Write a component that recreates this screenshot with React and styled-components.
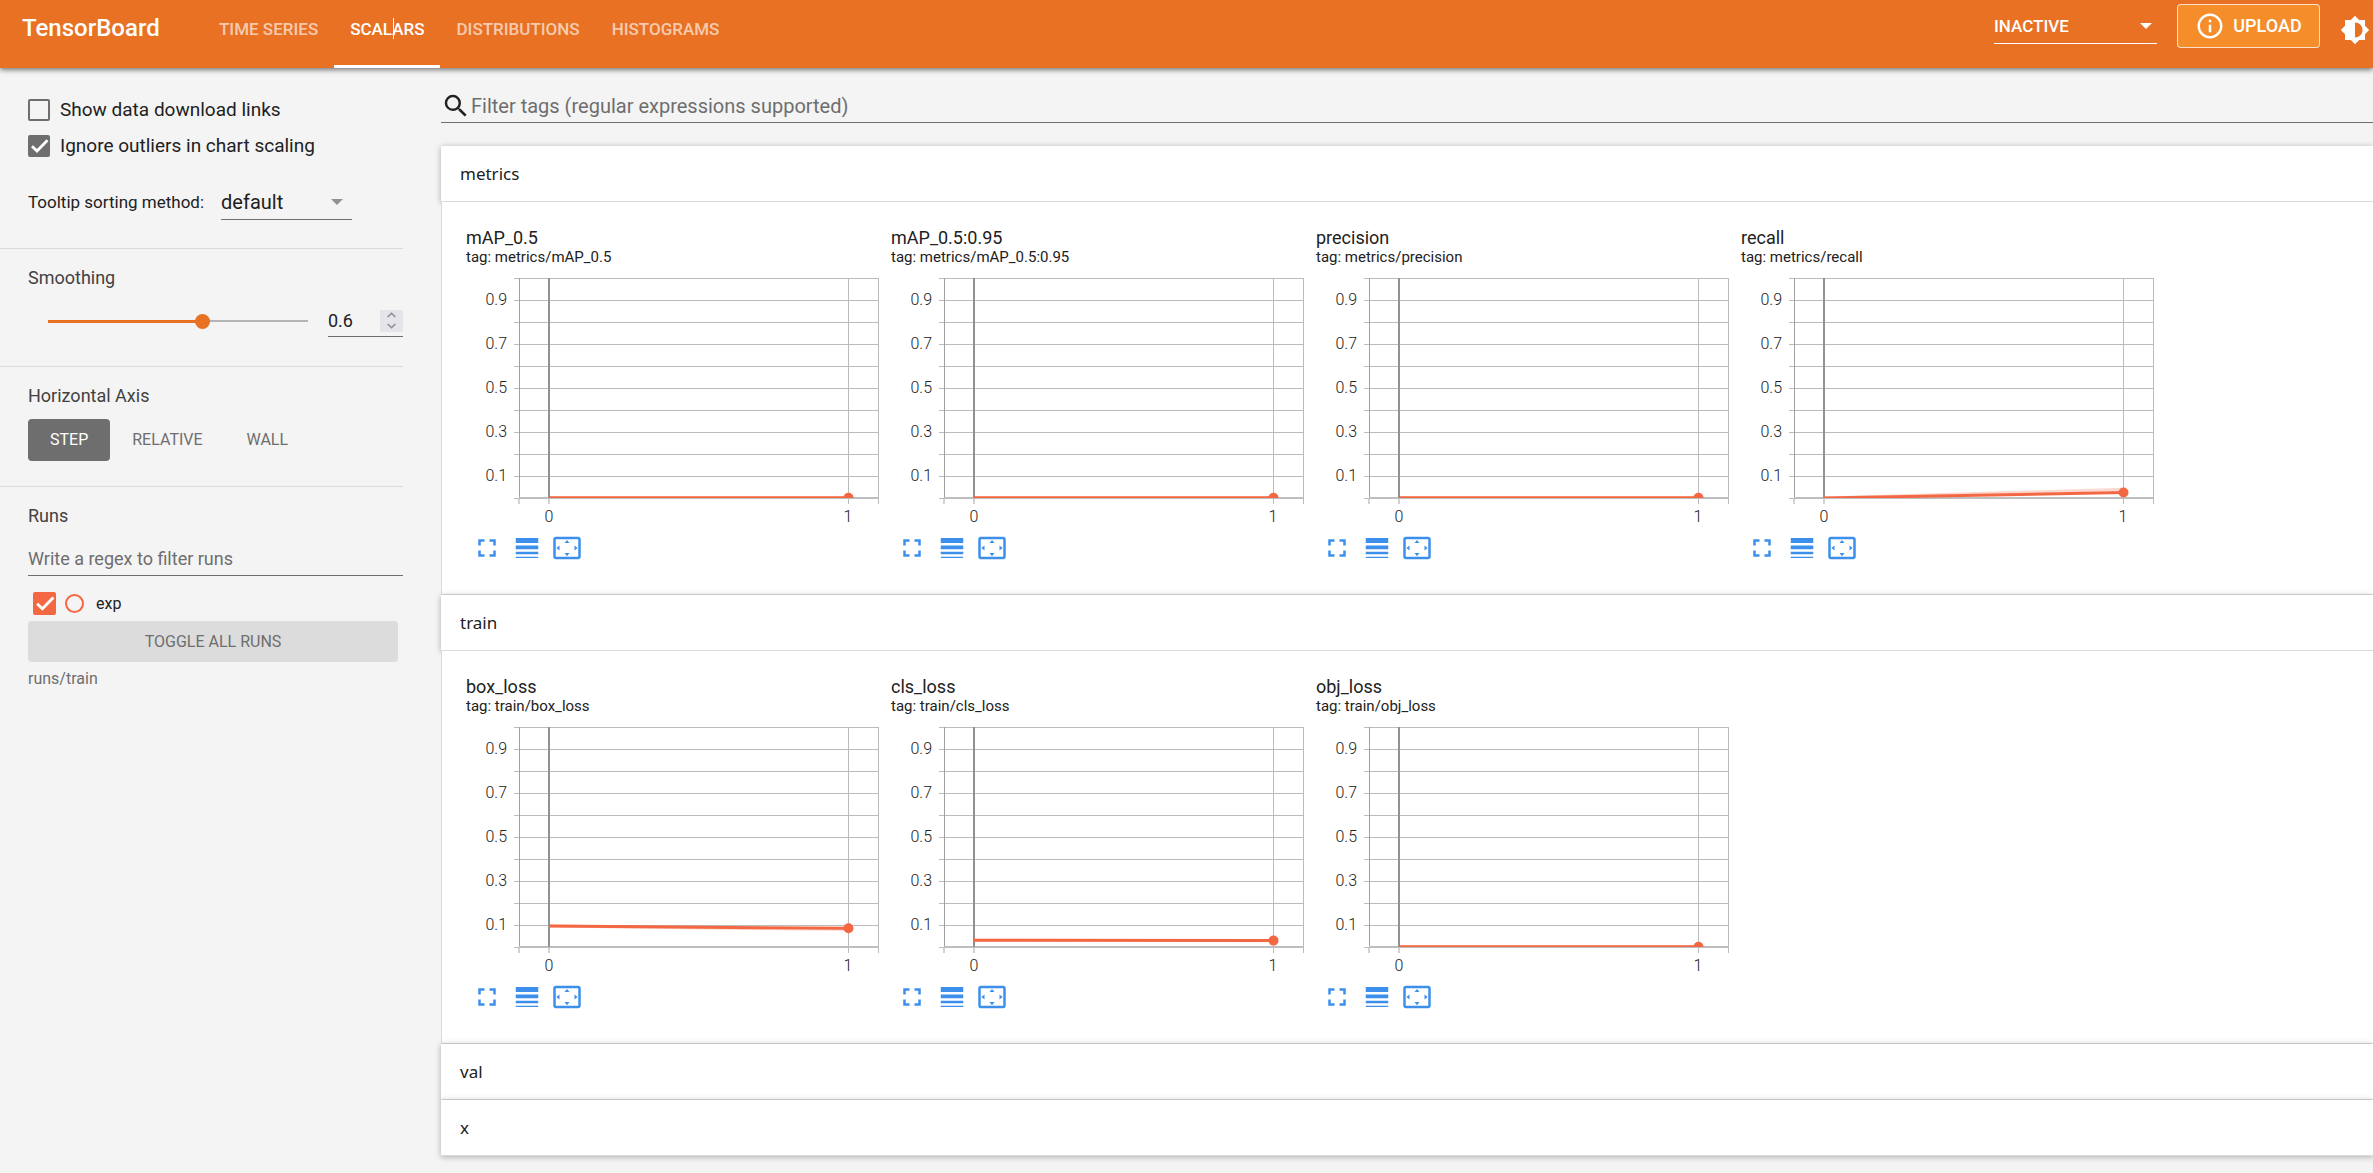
import React, { useId, useState } from "react";
import styled, { createGlobalStyle } from "styled-components";
import {
  MdBrightness6,
  MdFullscreen,
  MdInfoOutline,
  MdLineWeight,
  MdSearch,
  MdSettingsOverscan,
} from "react-icons/md";

const colors = {
  primary: "rgb(232, 113, 36)",
  upload: "rgb(246, 141, 43)",
  run: "rgb(244, 103, 67)",
  action: "rgb(60, 144, 236)",
  page: "rgb(244, 244, 244)",
  text: "rgb(33, 33, 33)",
  heading: "rgb(66, 66, 66)",
  muted: "rgb(110, 110, 110)",
  divider: "rgb(219, 219, 219)",
};

const GlobalStyle = createGlobalStyle`
  * {
    box-sizing: border-box;
  }

  body {
    margin: 0;
    background-color: ${colors.page};
    color: ${colors.text};
    font-family: Roboto, "Noto Sans", sans-serif;
    font-size: 18px;
    line-height: 22px;
  }

  button,
  input,
  select {
    margin: 0;
    padding: 0;
    border: none;
    border-radius: 0;
    background: none;
    color: inherit;
    font: inherit;
    outline: none;
  }
`;

/* toolbar */

const Header = styled.header`
  position: relative;
  z-index: 1;
  height: 68px;
  padding: 0 3px 0 22px;
  background-color: ${colors.primary};
  color: rgb(255, 255, 255);
  display: flex;
  flex-direction: row;
  box-shadow: 0 2px 5px rgba(0, 0, 0, 0.5);
`;

const Brand = styled.h1`
  flex: 0 0 181px;
  margin: 0;
  padding-bottom: 12px;
  font-size: 24px;
  font-weight: 500;
  display: flex;
  align-items: center;
`;

const Tabs = styled.nav`
  flex: 1 0 auto;
  display: flex;
`;

const Tab = styled.a`
  position: relative;
  padding: 0 16px 7px;
  border-bottom: 3px solid
    ${({ $active }) => ($active ? "rgb(255, 255, 255)" : "transparent")};
  color: ${({ $active }) =>
    $active ? "rgb(255, 255, 255)" : "rgba(255, 255, 255, 0.65)"};
  font-size: 17px;
  font-weight: 500;
  text-decoration: none;
  display: flex;
  align-items: center;
`;

const TextCursor = styled.span`
  position: absolute;
  top: 18px;
  left: 59px;
  width: 1px;
  height: 21px;
  background-color: rgb(255, 255, 255);
`;

const ToolbarActions = styled.div`
  padding-bottom: 16px;
  margin-right: 20px;
  display: flex;
  align-items: center;
  gap: 20px;
`;

const UploadButton = styled.button`
  width: 143px;
  height: 44px;
  border: 1px solid rgba(255, 255, 255, 0.75);
  border-radius: 4px;
  background-color: ${colors.upload};
  font-weight: 500;
  display: flex;
  align-items: center;
  justify-content: center;
  gap: 8px;
`;

const IconButton = styled.button`
  display: flex;
  align-items: center;
`;

const ThemeButton = styled(IconButton)`
  padding-bottom: 8px;
`;

/* form controls */

const SelectWrapper = styled.div`
  width: ${({ $width }) => $width}px;
  height: 36px;
  border-bottom: 1px solid
    ${({ $light }) => ($light ? "rgb(255, 255, 255)" : colors.muted)};
  color: ${({ $light }) => ($light ? "rgb(255, 255, 255)" : colors.text)};
  display: grid;
  align-items: center;

  > * {
    grid-area: 1 / 1;
  }
`;

const NativeSelect = styled.select`
  width: 100%;
  height: 35px;
  appearance: none;
  font-size: ${({ $light }) => ($light ? 17 : 20)}px;
  font-weight: ${({ $light }) => ($light ? 500 : 400)};
`;

const SelectArrow = styled.span`
  justify-self: end;
  margin-right: ${({ $light }) => ($light ? 5 : 9)}px;
  border: 6px solid transparent;
  border-top-color: ${({ $light }) =>
    $light ? "rgb(255, 255, 255)" : "rgb(145, 145, 145)"};
  border-bottom: none;
  pointer-events: none;
`;

const CheckboxFrame = styled.span`
  flex: none;
  display: grid;

  > * {
    grid-area: 1 / 1;
  }

  > svg {
    pointer-events: none;
  }
`;

const CheckboxInput = styled.input`
  width: ${({ $size }) => $size}px;
  height: ${({ $size }) => $size}px;
  appearance: none;
  border: 2px solid ${({ $color }) => $color};
  border-radius: 2px;

  &:checked {
    background-color: ${({ $color }) => $color};
  }
`;

const CheckboxLabel = styled.label`
  height: 36px;
  font-size: 19px;
  display: flex;
  align-items: center;
  gap: 10px;
`;

/* sidebar */

const Layout = styled.div`
  min-height: calc(100vh - 68px);
  display: flex;
  align-items: flex-start;
`;

const Sidebar = styled.aside`
  flex: 0 0 403px;
  min-width: 0;
  margin-right: 38px;
`;

const SidebarSection = styled.section`
  padding: 18px 0 ${({ $bottom }) => $bottom}px 28px;
  border-bottom: 1px solid ${colors.divider};

  &:first-child {
    padding-top: 24px;
  }

  &:last-child {
    border-bottom: none;
  }
`;

const SectionTitle = styled.h3`
  margin: 0;
  color: ${colors.heading};
  font-size: 18px;
  font-weight: 400;
`;

const TooltipRow = styled.div`
  margin-top: 20px;
  font-size: 17px;
  display: flex;
  align-items: center;
  gap: 17px;
`;

const SmoothingRow = styled.div`
  margin-top: 16px;
  padding-left: 20px;
  display: flex;
  align-items: center;
  gap: 20px;
`;

const Slider = styled.input`
  flex: 1 1 0;
  min-width: 0;
  height: 15px;
  appearance: none;
  background:
    linear-gradient(${colors.primary}, ${colors.primary}) left center /
      ${({ $fill }) => $fill}% 3px no-repeat,
    linear-gradient(rgb(181, 181, 181), rgb(181, 181, 181)) left center / 100%
      2px no-repeat;

  &::-webkit-slider-thumb {
    appearance: none;
    width: 15px;
    height: 15px;
    border-radius: 50%;
    background-color: ${colors.primary};
  }
`;

const NumberField = styled.div`
  flex: 0 0 75px;
  min-width: 0;
  height: 32px;
  border-bottom: 1px solid ${colors.muted};
  display: flex;
  align-items: center;
`;

const NumberInput = styled.input`
  flex: 1 1 0;
  width: 0;
  min-width: 0;
  appearance: textfield;

  &::-webkit-inner-spin-button {
    display: none;
  }
`;

const Spinner = styled.div`
  flex: 0 0 23px;
  height: 22px;
  background-color: rgb(228, 228, 233);
  color: rgb(140, 140, 148);
  display: flex;
  flex-direction: column;
`;

const SpinnerButton = styled.button`
  flex: 1 0 0;
  display: flex;
  align-items: center;
  justify-content: center;
`;

const AxisButtons = styled.div`
  margin-top: 12px;
  display: flex;
`;

const AxisButton = styled.button`
  height: 42px;
  padding: 0 22px;
  border-radius: 4px;
  background-color: ${({ $active }) => ($active ? colors.muted : "transparent")};
  color: ${({ $active }) => ($active ? "rgb(255, 255, 255)" : colors.muted)};
  font-size: 16px;
`;

const RunsFilter = styled.input`
  width: 100%;
  height: 34px;
  margin-top: 15px;
  border-bottom: 1px solid ${colors.muted};

  &::placeholder {
    color: ${colors.muted};
  }
`;

const RunRow = styled.div`
  height: 35px;
  margin-top: 10px;
  padding-left: 5px;
  font-size: 16px;
  display: flex;
  align-items: center;
`;

const RunIsolator = styled.button`
  width: 19px;
  height: 19px;
  margin: 0 12px 0 9px;
  border: 2px solid ${colors.run};
  border-radius: 50%;
`;

const ToggleAllButton = styled.button`
  width: 370px;
  height: 41px;
  border-radius: 4px;
  background-color: rgb(220, 220, 220);
  color: ${colors.muted};
  font-size: 16px;
`;

const LogDir = styled.div`
  margin-top: 6px;
  color: ${colors.muted};
  font-size: 16px;
`;

/* dashboard */

const Main = styled.main`
  flex: 1 1 0;
  min-width: 0;
  padding-top: 21px;
`;

const TagFilter = styled.label`
  height: 34px;
  margin-bottom: 23px;
  border-bottom: 1px solid ${colors.muted};
  display: flex;
  align-items: center;
`;

const TagFilterInput = styled.input`
  flex: 1 1 auto;
  font-size: 20px;

  &::placeholder {
    color: ${colors.muted};
  }
`;

/* positioned, so its shadow falls on the body of the pane above */
const PaneHeader = styled.button`
  position: relative;
  width: 100%;
  height: 56px;
  padding: 0 19px;
  border-bottom: 1px solid ${colors.divider};
  background-color: rgb(255, 255, 255);
  box-shadow: 0 1px 6px rgba(0, 0, 0, 0.3);
  font-family: "Noto Sans", sans-serif;
  font-size: 17px;
  text-align: left;
  display: block;
`;

const PaneBody = styled.div`
  position: relative;
  padding: 25px 0 31px 24px;
  border: solid ${colors.divider};
  border-width: 0 0 1px 1px;
  background-color: rgb(255, 255, 255);
  display: flex;
  flex-wrap: wrap;
`;

const Card = styled.article`
  flex: 0 0 425px;
`;

const CardTitle = styled.h4`
  margin: 0;
  font-size: 18px;
  font-weight: 400;
`;

const CardTag = styled.div`
  font-size: 15px;
  line-height: 17px;
`;

const Chart = styled.svg`
  width: 414px;
  height: 267px;
  display: block;
`;

const AxisText = styled.text`
  fill: ${colors.text};
  font-size: 16px;
  font-weight: 300;
`;

const CardActions = styled.div`
  padding-left: 6px;
  color: ${colors.action};
  display: flex;
  gap: 10px;
`;

const panes = [
  {
    name: "metrics",
    charts: [
      { title: "mAP_0.5", points: [0.001, 0.001], raw: [0.001, 0.001] },
      { title: "mAP_0.5:0.95", points: [0.001, 0.001], raw: [0.001, 0.001] },
      { title: "precision", points: [0.001, 0.001], raw: [0.001, 0.001] },
      { title: "recall", points: [0, 0.025], raw: [0, 0.04] },
    ],
  },
  {
    name: "train",
    charts: [
      { title: "box_loss", points: [0.095, 0.085], raw: [0.095, 0.079] },
      { title: "cls_loss", points: [0.031, 0.029], raw: [0.031, 0.028] },
      { title: "obj_loss", points: [0.001, 0.001], raw: [0.001, 0.001] },
    ],
  },
  { name: "val", charts: [] },
  { name: "x", charts: [] },
];

const tabNames = ["TIME SERIES", "SCALARS", "DISTRIBUTIONS", "HISTOGRAMS"];

const plot = { left: 53, right: 413, top: 12, bottom: 232, x0: 83, x1: 382 };
const gridSteps = [1, 2, 3, 4, 5, 6, 7, 8, 9, 10];
const yLabels = [0.1, 0.3, 0.5, 0.7, 0.9];

const toY = (value) =>
  plot.bottom - value * (plot.bottom - plot.top);

function Select({ label, value, width, light }) {
  return (
    <SelectWrapper $width={width} $light={light}>
      <NativeSelect aria-label={label} $light={light} defaultValue={value}>
        <option>{value}</option>
      </NativeSelect>
      <SelectArrow $light={light} />
    </SelectWrapper>
  );
}

function Checkbox({ id, label, color = colors.muted, size = 22, initial }) {
  const [checked, setChecked] = useState(Boolean(initial));

  return (
    <CheckboxFrame>
      <CheckboxInput
        type="checkbox"
        id={id}
        aria-label={label}
        checked={checked}
        onChange={() => setChecked(!checked)}
        $color={color}
        $size={size}
      />
      {checked && (
        <svg width={size} height={size} viewBox="0 0 22 22">
          <path
            d="M4 11.2 L9 16 L19.5 5.3"
            fill="none"
            stroke="white"
            strokeWidth="2.8"
          />
        </svg>
      )}
    </CheckboxFrame>
  );
}

function LineChart({ title, points, raw }) {
  const clipId = useId();
  const path = (values) =>
    `M${plot.x0} ${toY(values[0])} L${plot.x1 + 0.5} ${toY(values[1])}`;

  return (
    <Chart role="img" aria-label={title}>
      <clipPath id={clipId}>
        <rect x={plot.x0} y={plot.top} width="330" height="220" />
      </clipPath>
      <g stroke="rgb(188, 188, 188)">
        {gridSteps.map((step) => (
          <path key={step} d={`M48 ${toY(step / 10) + 0.5} H${plot.right}`} />
        ))}
        <path d={`M${plot.x1 + 0.5} ${plot.top} V238`} />
        <path d={`M${plot.right - 0.5} ${plot.top} V238`} />
        <path
          d={`M${plot.left} 232 V238 M${plot.x0} 232 V238`}
          stroke="rgb(210, 210, 210)"
          strokeWidth="2"
        />
        <path d="M48 232.5 H53" />
      </g>
      <path
        d={`M${plot.left + 0.5} ${plot.top} V232`}
        stroke="rgb(160, 160, 160)"
      />
      <path
        d={`M${plot.left} 232 H${plot.right}`}
        stroke="rgb(190, 190, 190)"
        strokeWidth="2"
      />
      <path
        d={`M${plot.x0} ${plot.top} V232`}
        stroke="rgb(145, 145, 145)"
        strokeWidth="2"
      />
      <g clipPath={`url(#${clipId})`} stroke={colors.run} fill="none">
        <path d={path(raw)} strokeWidth="3" opacity="0.25" />
        <path d={path(points)} strokeWidth="3" />
        <circle
          cx={plot.x1 + 0.5}
          cy={toY(points[1])}
          r="5"
          fill={colors.run}
          stroke="none"
        />
      </g>
      {yLabels.map((value) => (
        <AxisText key={value} x="41" y={toY(value) + 5} textAnchor="end">
          {value}
        </AxisText>
      ))}
      <AxisText x={plot.x0} y="256" textAnchor="middle">
        0
      </AxisText>
      <AxisText x={plot.x1} y="256" textAnchor="middle">
        1
      </AxisText>
    </Chart>
  );
}

function ScalarCard({ pane, chart }) {
  return (
    <Card>
      <CardTitle>{chart.title}</CardTitle>
      <CardTag>
        tag: {pane}/{chart.title}
      </CardTag>
      <LineChart {...chart} />
      <CardActions>
        <IconButton aria-label="Toggle fullscreen">
          <MdFullscreen size={30} />
        </IconButton>
        <IconButton aria-label="Toggle log scale">
          <MdLineWeight size={30} />
        </IconButton>
        <IconButton aria-label="Fit domain to data">
          <MdSettingsOverscan size={30} />
        </IconButton>
      </CardActions>
    </Card>
  );
}

function Toolbar() {
  return (
    <Header>
      <Brand>TensorBoard</Brand>
      <Tabs>
        {tabNames.map((name) => (
          <Tab key={name} href="#" $active={name === "SCALARS"}>
            {name}
            {name === "SCALARS" && <TextCursor />}
          </Tab>
        ))}
      </Tabs>
      <ToolbarActions>
        <Select label="Inactive dashboards" value="INACTIVE" width={163} light />
        <UploadButton>
          <MdInfoOutline size={30} />
          UPLOAD
        </UploadButton>
      </ToolbarActions>
      <ThemeButton aria-label="Toggle theme">
        <MdBrightness6 size={30} />
      </ThemeButton>
    </Header>
  );
}

function Settings() {
  const [smoothing, setSmoothing] = useState(0.6);
  const step = (delta) =>
    setSmoothing(
      Math.min(1, Math.max(0, Math.round((smoothing + delta) * 10) / 10))
    );

  return (
    <Sidebar>
      <SidebarSection $bottom={28}>
        <CheckboxLabel htmlFor="download-links">
          <Checkbox id="download-links" />
          Show data download links
        </CheckboxLabel>
        <CheckboxLabel htmlFor="ignore-outliers">
          <Checkbox id="ignore-outliers" initial />
          Ignore outliers in chart scaling
        </CheckboxLabel>
        <TooltipRow>
          <span>Tooltip sorting method:</span>
          <Select label="Tooltip sorting method" value="default" width={131} />
        </TooltipRow>
      </SidebarSection>

      <SidebarSection $bottom={29}>
        <SectionTitle>Smoothing</SectionTitle>
        <SmoothingRow>
          <Slider
            type="range"
            aria-label="Smoothing"
            min="0"
            max="1"
            step="0.1"
            value={smoothing}
            onChange={(event) => setSmoothing(Number(event.target.value))}
            $fill={smoothing * 100}
          />
          <NumberField>
            <NumberInput
              type="number"
              aria-label="Smoothing value"
              value={smoothing}
              onChange={(event) => setSmoothing(Number(event.target.value))}
            />
            <Spinner>
              <SpinnerButton aria-label="Increase" onClick={() => step(0.1)}>
                <svg width="9" height="6" viewBox="0 0 9 6">
                  <path
                    d="M0.7 5 L4.5 1.3 L8.3 5"
                    fill="none"
                    stroke="currentColor"
                    strokeWidth="1.6"
                  />
                </svg>
              </SpinnerButton>
              <SpinnerButton aria-label="Decrease" onClick={() => step(-0.1)}>
                <svg width="9" height="6" viewBox="0 0 9 6">
                  <path
                    d="M0.7 1 L4.5 4.7 L8.3 1"
                    fill="none"
                    stroke="currentColor"
                    strokeWidth="1.6"
                  />
                </svg>
              </SpinnerButton>
            </Spinner>
          </NumberField>
        </SmoothingRow>
      </SidebarSection>

      <SidebarSection $bottom={25}>
        <SectionTitle>Horizontal Axis</SectionTitle>
        <AxisButtons>
          <AxisButton $active>STEP</AxisButton>
          <AxisButton>RELATIVE</AxisButton>
          <AxisButton>WALL</AxisButton>
        </AxisButtons>
      </SidebarSection>

      <SidebarSection $bottom={0}>
        <SectionTitle>Runs</SectionTitle>
        <RunsFilter
          type="text"
          aria-label="Filter runs"
          placeholder="Write a regex to filter runs"
        />
        <RunRow>
          <Checkbox id="run-exp" color={colors.run} size={23} initial />
          <RunIsolator aria-label="Show only exp" />
          <label htmlFor="run-exp">exp</label>
        </RunRow>
        <ToggleAllButton>TOGGLE ALL RUNS</ToggleAllButton>
        <LogDir>runs/train</LogDir>
      </SidebarSection>
    </Sidebar>
  );
}

export default function App() {
  return (
    <>
      <GlobalStyle />
      <Toolbar />
      <Layout>
        <Settings />
        <Main>
          <TagFilter>
            <MdSearch size={30} />
            <TagFilterInput
              type="text"
              aria-label="Filter tags"
              placeholder="Filter tags (regular expressions supported)"
            />
          </TagFilter>
          {panes.map(({ name, charts }) => (
            <section key={name}>
              <PaneHeader>{name}</PaneHeader>
              {charts.length > 0 && (
                <PaneBody>
                  {charts.map((chart) => (
                    <ScalarCard key={chart.title} pane={name} chart={chart} />
                  ))}
                </PaneBody>
              )}
            </section>
          ))}
        </Main>
      </Layout>
    </>
  );
}
